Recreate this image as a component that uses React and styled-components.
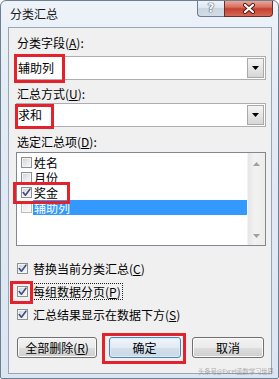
import React from "react";
import styled, { createGlobalStyle } from "styled-components";

const Global = createGlobalStyle`
  html, body { margin: 0; padding: 0; background: #ffffff; }
  body {
    font-family: "Noto Sans CJK SC", "Noto Sans", sans-serif;
    font-size: 12px;
    color: #000;
  }
  * { box-sizing: border-box; }
`;

const Window = styled.div`
  position: relative;
  width: 279px;
  height: 379px;
  border: 1px solid #6f7f92;
  border-radius: 6px 6px 2px 2px;
  background: linear-gradient(180deg, #eef3f9 0%, #e4ecf5 20%, #dbe6f2 100%);
  display: flex;
  flex-direction: column;
  padding: 0 6px 4px 7px;
  overflow: hidden;
`;

const TitleBar = styled.div`
  height: 26px;
  display: flex;
  align-items: flex-start;
  flex-shrink: 0;
`;

const Title = styled.div`
  margin-left: 2px;
  padding-top: 5px;
  line-height: 16px;
  font-size: 12px;
  color: #1a1a1a;
`;

const CaptionGroup = styled.div`
  margin-left: auto;
  margin-right: -1px;
  margin-top: -1px;
  display: flex;
`;

const HelpButton = styled.div`
  width: 27px;
  height: 17px;
  border: 1px solid #6d7c8f;
  border-top: none;
  border-right: none;
  border-radius: 0 0 0 4px;
  background: linear-gradient(180deg, #f3f6fa 0%, #dde5ee 50%, #c9d5e1 51%, #d3dde8 100%);
  display: flex;
  align-items: center;
  justify-content: center;
  font-family: "DejaVu Sans", sans-serif;
  font-weight: bold;
  font-size: 12px;
  color: #f8fafc;
  text-shadow: 0 0 1px #4a5667, 0 0 1px #4a5667, 0 0 1px #4a5667;
`;

const CloseButton = styled.div`
  width: 49px;
  height: 17px;
  border: 1px solid #6a2e28;
  border-top: none;
  border-radius: 0 0 4px 0;
  background: linear-gradient(180deg, #eab0a3 0%, #d86e5d 45%, #c4402f 55%, #d46a55 100%);
  display: flex;
  align-items: center;
  justify-content: center;
`;

const Client = styled.div`
  flex: 1;
  background: #f0f0f0;
  border: 1px solid #98a5b4;
  padding: 0 5px 0 7px;
  display: flex;
  flex-direction: column;
`;

const Label = styled.div`
  margin-top: ${(p) => p.$mt}px;
  height: 16px;
  line-height: 16px;
  padding-left: 1px;
  white-space: nowrap;
`;

const Key = styled.span`
  text-decoration: underline;
  text-underline-offset: 1px;
`;

const Combo = styled.div`
  margin-top: ${(p) => p.$mt}px;
  width: 250px;
  height: 24px;
  border: 1px solid #abadb3;
  background: #fff;
  display: flex;
  align-items: center;
`;

const ComboText = styled.div`
  padding-left: 1px;
  line-height: 16px;
`;

const DropButton = styled.div`
  margin-left: auto;
  margin-right: 1px;
  width: 17px;
  height: 20px;
  border: 1px solid #a9a9a9;
  background: linear-gradient(180deg, #f4f4f4 0%, #e6e6e6 50%, #d6d6d6 100%);
  display: flex;
  align-items: center;
  justify-content: center;
`;

const ListBox = styled.div`
  margin-top: 2px;
  width: 250px;
  height: 94px;
  border: 1px solid #828790;
  background: #fff;
  display: flex;
`;

const ListBody = styled.div`
  flex: 1;
  padding-top: 2px;
  display: flex;
  flex-direction: column;
`;

const ListItem = styled.div`
  height: 15px;
  display: flex;
  align-items: center;
  padding-left: 4px;
`;

const ItemText = styled.div`
  flex: 1;
  margin-left: 1px;
  padding-left: 1px;
  height: 15px;
  line-height: 15px;
  overflow: hidden;
  background: ${(p) => (p.$selected ? "#3399ff" : "transparent")};
  color: ${(p) => (p.$selected ? "#ffffff" : "#000")};
`;

const ScrollBar = styled.div`
  width: 18px;
  background: linear-gradient(90deg, #e6e6e6 0%, #f2f2f2 40%, #ececec 100%);
  border-left: 1px solid #f4f4f4;
  display: flex;
  flex-direction: column;
  align-items: center;
  justify-content: space-between;
  padding: 9px 0 7px;
`;

const BoxWrap = styled.div`
  width: 11px;
  height: 11px;
  flex-shrink: 0;
  border: 1px solid #8e8f8f;
  background: linear-gradient(135deg, #cdd1d7 0%, #e8e9eb 55%, #fafafa 100%);
  box-shadow: inset 0 0 0 1px #f4f4f4;
  display: flex;
  align-items: center;
  justify-content: center;
  opacity: ${(p) => (p.$faded ? 0.6 : 1)};
`;

const OptionRow = styled.div`
  height: 23px;
  display: flex;
  align-items: center;
  padding-left: 1px;
`;

const OptionText = styled.div`
  margin-left: 3px;
  height: 17px;
  line-height: 15px;
  padding: 0 1px;
  border: 1px dotted ${(p) => (p.$focus ? "#222" : "transparent")};
  white-space: nowrap;
`;

const Options = styled.div`
  margin-top: 11px;
  display: flex;
  flex-direction: column;
`;

const ButtonRow = styled.div`
  margin-top: 11px;
  width: 250px;
  padding: 0 2px 0 1px;
  display: flex;
  justify-content: space-between;
`;

const Button = styled.div`
  width: ${(p) => p.$w}px;
  height: 21px;
  border: 1px solid ${(p) => (p.$default ? "#4a86b8" : "#707070")};
  border-radius: 3px;
  background: ${(p) =>
    p.$default
      ? "linear-gradient(180deg, #eef4f9 0%, #e2ebf3 50%, #d3e0eb 51%, #c9d8e6 100%)"
      : "linear-gradient(180deg, #f2f2f2 0%, #ebebeb 50%, #dddddd 51%, #cfcfcf 100%)"};
  box-shadow: inset 0 0 0 1px ${(p) => (p.$default ? "#dcecf8" : "#fafafa")};
  display: flex;
  align-items: center;
  justify-content: center;
  line-height: 16px;
`;

const Highlight = styled.div`
  position: absolute;
  left: ${(p) => p.$x}px;
  top: ${(p) => p.$y}px;
  width: ${(p) => p.$w}px;
  height: ${(p) => p.$h}px;
  border: 3px solid #e2232b;
  pointer-events: none;
`;

const Watermark = styled.div`
  position: absolute;
  left: 197px;
  top: 366px;
  font-size: 6.5px;
  line-height: 9px;
  color: rgba(110, 110, 110, 0.55);
  white-space: nowrap;
  letter-spacing: -0.3px;
`;

const Check = ({ checked, faded }) => (
  <BoxWrap $faded={faded}>
    {checked && (
      <svg width="9" height="9" viewBox="0 0 9 9">
        <path d="M1.2 4.6 L3.4 7.2 L7.9 1.2" fill="none" stroke="#3b4f82" strokeWidth="1.6" strokeLinecap="round" strokeLinejoin="round" />
      </svg>
    )}
  </BoxWrap>
);

const DownArrow = ({ color = "#000", w = 7, h = 4 }) => (
  <svg width={w} height={h} viewBox={`0 0 ${w} ${h}`}>
    <path d={`M0 0 L${w} 0 L${w / 2} ${h} Z`} fill={color} />
  </svg>
);

const UpArrow = ({ color = "#a0a0a0", w = 7, h = 4 }) => (
  <svg width={w} height={h} viewBox={`0 0 ${w} ${h}`}>
    <path d={`M0 ${h} L${w} ${h} L${w / 2} 0 Z`} fill={color} />
  </svg>
);

const items = [
  { name: "姓名", checked: false },
  { name: "月份", checked: false },
  { name: "奖金", checked: true },
  { name: "辅助列", checked: false, selected: true },
];

export default function App() {
  return (
    <>
      <Global />
      <Window>
        <TitleBar>
          <Title>分类汇总</Title>
          <CaptionGroup>
            <HelpButton>?</HelpButton>
            <CloseButton>
              <svg width="14" height="11" viewBox="0 0 14 11">
                <path d="M3 2 L11 9 M11 2 L3 9" stroke="#4a1812" strokeWidth="4" strokeLinecap="round" />
                <path d="M3 2 L11 9 M11 2 L3 9" stroke="#ffffff" strokeWidth="2.2" strokeLinecap="round" />
              </svg>
            </CloseButton>
          </CaptionGroup>
        </TitleBar>
        <Client>
          <Label $mt={7}>
            分类字段(<Key>A</Key>):
          </Label>
          <Combo $mt={5}>
            <ComboText>辅助列</ComboText>
            <DropButton>
              <DownArrow />
            </DropButton>
          </Combo>
          <Label $mt={6}>
            汇总方式(<Key>U</Key>):
          </Label>
          <Combo $mt={1}>
            <ComboText>求和</ComboText>
            <DropButton>
              <DownArrow />
            </DropButton>
          </Combo>
          <Label $mt={7}>
            选定汇总项(<Key>D</Key>):
          </Label>
          <ListBox>
            <ListBody>
              {items.map((it) => (
                <ListItem key={it.name}>
                  <Check checked={it.checked} faded={it.selected} />
                  <ItemText $selected={it.selected}>{it.name}</ItemText>
                </ListItem>
              ))}
            </ListBody>
            <ScrollBar>
              <UpArrow />
              <DownArrow color="#a0a0a0" />
            </ScrollBar>
          </ListBox>
          <Options>
            <OptionRow>
              <Check checked />
              <OptionText>
                替换当前分类汇总(<Key>C</Key>)
              </OptionText>
            </OptionRow>
            <OptionRow>
              <Check checked />
              <OptionText $focus>
                每组数据分页(<Key>P</Key>)
              </OptionText>
            </OptionRow>
            <OptionRow>
              <Check checked />
              <OptionText>
                汇总结果显示在数据下方(<Key>S</Key>)
              </OptionText>
            </OptionRow>
          </Options>
          <ButtonRow>
            <Button $w={80}>
              全部删除(<Key>R</Key>)
            </Button>
            <Button $w={72} $default>
              确定
            </Button>
            <Button $w={72}>取消</Button>
          </ButtonRow>
        </Client>
        <Highlight $x={13} $y={53} $w={51} $h={29} />
        <Highlight $x={14} $y={103} $w={39} $h={25} />
        <Highlight $x={12} $y={181} $w={57} $h={22} />
        <Highlight $x={9} $y={280} $w={23} $h={23} />
        <Highlight $x={101} $y={332} $w={84} $h={31} />
        <Watermark>头条号@Excel函数学习世界</Watermark>
      </Window>
    </>
  );
}
